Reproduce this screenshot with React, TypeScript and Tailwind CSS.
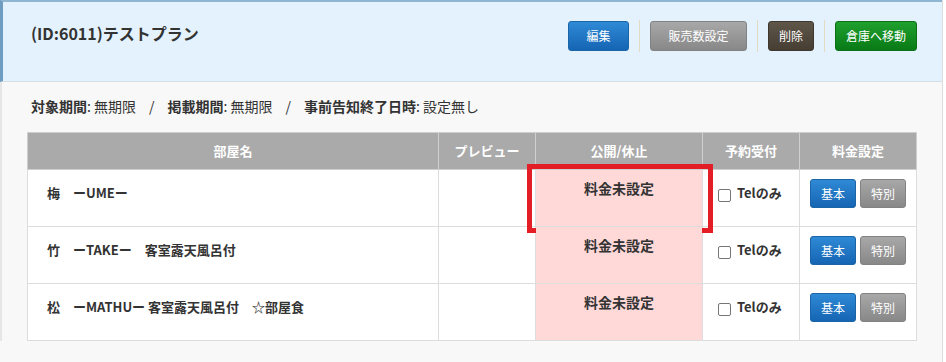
import React from "react";

const rooms = [
  "梅　ーUMEー",
  "竹　ーTAKEー　客室露天風呂付",
  "松　ーMATHUー 客室露天風呂付　☆部屋食",
];

function Sep() {
  return <div className="mx-[10px] h-[32px] w-px bg-[#e3dac4]" />;
}

export default function App() {
  return (
    <div
      className="w-[946px] h-[362px] overflow-hidden bg-white text-[#333]"
      style={{ fontFamily: '"Noto Sans CJK JP", "Noto Sans", sans-serif' }}
    >
      <div className="w-[943px] h-[362px] border-r border-[#dcdcdc] bg-[#f8f8f8]">
        {/* header */}
        <div className="flex h-[82px] items-start justify-between border-t-2 border-l-[3px] border-b border-t-[#91b6d2] border-l-[#6f9cc1] border-b-[#d3dfe8] bg-[#e4f2fd] pl-[28px] pr-[25px] pt-[18px]">
          <h1 className="-mt-[1px] text-[16px] font-bold leading-[28px] text-[#333]">(ID:6011)テストプラン</h1>
          <div className="flex items-center">
            <button className="h-[30px] w-[61px] rounded-[3px] border border-[#1b64a8] bg-gradient-to-b from-[#2f8ad6] to-[#1565b3] text-[12px] text-white">
              編集
            </button>
            <Sep />
            <button className="h-[30px] w-[97px] rounded-[3px] border border-[#828282] bg-gradient-to-b from-[#a8a8a8] to-[#888] text-[12px] text-white">
              販売数設定
            </button>
            <Sep />
            <button className="h-[30px] w-[46px] rounded-[3px] border border-[#3f382e] bg-gradient-to-b from-[#5f5649] to-[#463e33] text-[12px] text-white">
              削除
            </button>
            <Sep />
            <button className="h-[30px] w-[82px] rounded-[3px] border border-[#0d7018] bg-gradient-to-b from-[#1fa02d] to-[#087a16] text-[12px] text-white">
              倉庫へ移動
            </button>
          </div>
        </div>

        {/* body */}
        <div className="border-l-2 border-[#e6e6e6] pl-[25px] pt-[13px]">
          <p className="flex items-center pl-[4px] text-[14px] leading-[22px] text-[#333]">
            <b>対象期間</b>
            <span>:&nbsp;無期限</span>
            <span className="mx-[13px]">/</span>
            <b>掲載期間</b>
            <span>:&nbsp;無期限</span>
            <span className="mx-[13px]">/</span>
            <b>事前告知終了日時</b>
            <span>:&nbsp;設定無し</span>
          </p>

          <table className="mt-[15px] w-[889px] table-fixed border-collapse bg-white text-[13px]">
            <colgroup>
              <col className="w-[411px]" />
              <col className="w-[97px]" />
              <col className="w-[167px]" />
              <col className="w-[97px]" />
              <col className="w-[117px]" />
            </colgroup>
            <thead>
              <tr className="h-[37px] bg-[#aaaaaa] text-white">
                <th className="border border-[#cfcfcf] font-bold">部屋名</th>
                <th className="border border-[#cfcfcf] font-bold">プレビュー</th>
                <th className="border border-[#cfcfcf] font-bold">公開/休止</th>
                <th className="border border-[#cfcfcf] font-bold">予約受付</th>
                <th className="border border-[#cfcfcf] font-bold">料金設定</th>
              </tr>
            </thead>
            <tbody>
              {rooms.map((name, i) => (
                <tr key={i} className="h-[57px]">
                  <td className="border border-[#dddddd] pl-[19px] pt-[14px] align-top font-bold leading-[18px]">{name}</td>
                  <td className="border border-[#dddddd]" />
                  <td className="relative border border-[#dddddd] bg-[#ffd8d8] pt-[8px] text-center align-top text-[14px] font-bold leading-[20px]">
                    料金未設定
                    {i === 0 && (
                      <div className="absolute left-[-9px] top-[-6px] h-[69px] w-[186px] border-[5px] border-[#e31e26]" />
                    )}
                  </td>
                  <td className="border border-[#dddddd] pl-[15px] pt-[14px] align-top">
                    <label className="flex items-center font-bold leading-[18px]">
                      <span className="mr-[6px] mt-[5px] inline-block h-[13px] w-[13px] rounded-[2px] border border-[#767676] bg-white" />
                      Telのみ
                    </label>
                  </td>
                  <td className="border border-[#dddddd] pl-[10px] pt-[9px] align-top">
                    <div className="flex gap-[4px]">
                      <button className="h-[29px] w-[46px] rounded-[3px] border border-[#1b64a8] bg-gradient-to-b from-[#2f8ad6] to-[#1565b3] text-[12px] text-white">
                        基本
                      </button>
                      <button className="h-[29px] w-[46px] rounded-[3px] border border-[#828282] bg-gradient-to-b from-[#a8a8a8] to-[#888] text-[12px] text-white">
                        特別
                      </button>
                    </div>
                  </td>
                </tr>
              ))}
            </tbody>
          </table>
        </div>
      </div>
    </div>
  );
}
